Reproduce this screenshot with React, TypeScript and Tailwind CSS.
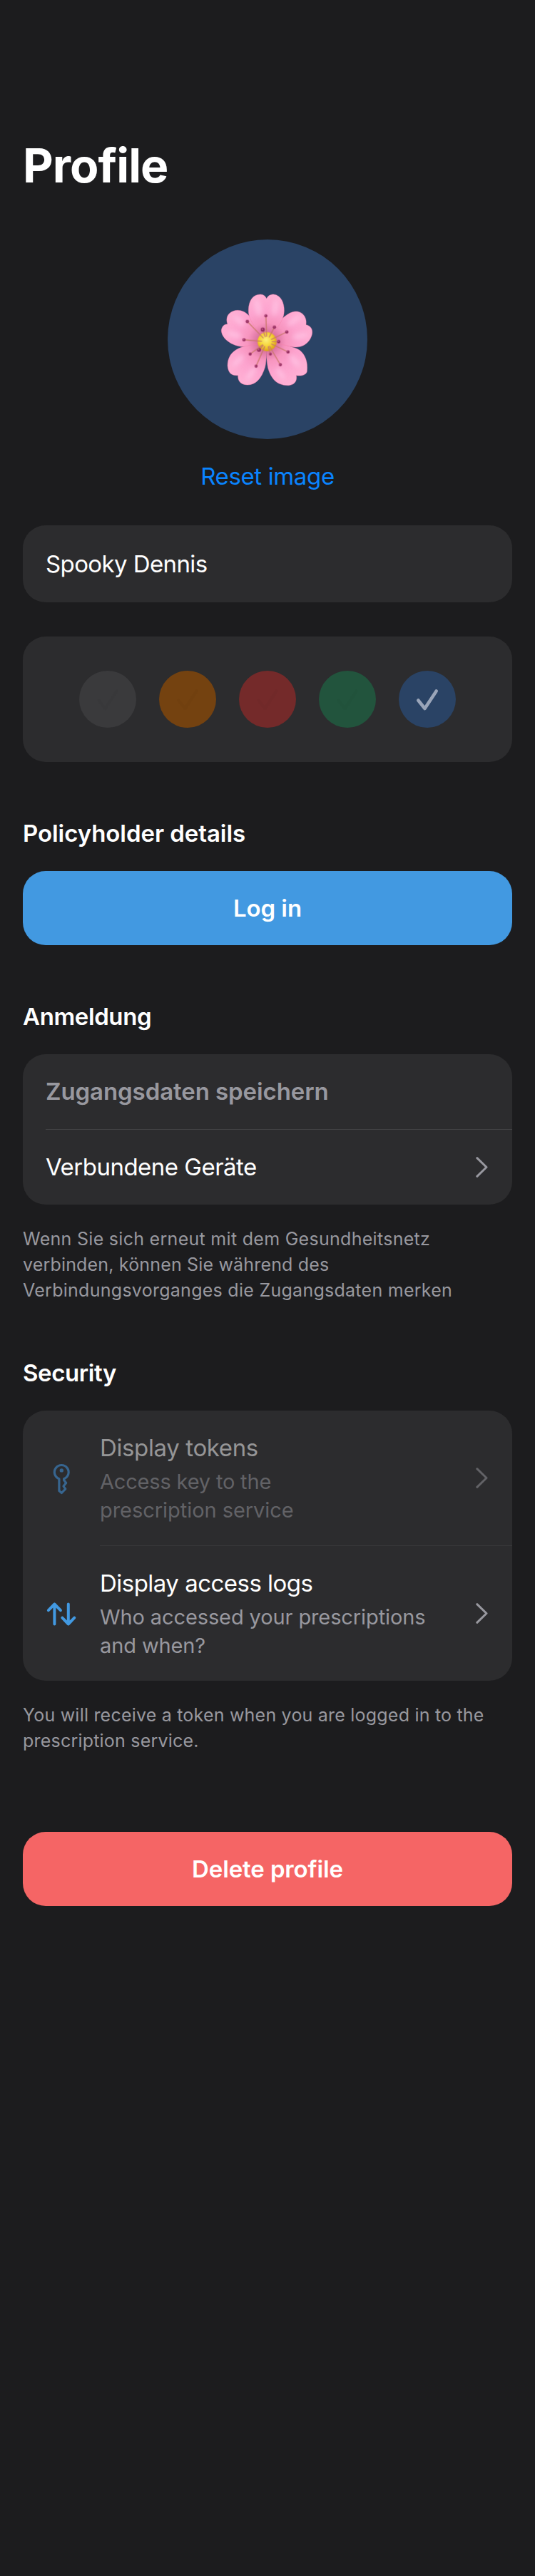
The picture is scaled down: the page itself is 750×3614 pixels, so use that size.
import type { ReactNode } from "react";
import clsx from "clsx";

const petals = [
  "M207 215 C170 225 130 237 100 235 C50 228 15 195 16 165 C18 150 28 140 42 140 C36 125 38 108 48 97 C65 80 90 78 110 88 C145 105 190 180 207 215Z",
  "M207 215 C220 180 270 95 325 87 C350 84 378 105 372 143 C390 146 400 160 398 178 C394 210 365 240 325 237 C290 232 240 225 207 215Z",
  "M206 215 C190 180 128 140 130 80 C131 40 150 15 180 15 C195 15 203 26 206 33 C211 22 220 15 236 15 C266 18 281 50 280 85 C279 140 225 180 206 215Z",
  "M207 215 C203 260 207 290 200 320 C185 370 160 396 125 396 C95 394 85 378 86 356 C60 358 45 348 42 315 C42 275 65 250 100 238 C130 228 170 225 207 215Z",
  "M207 215 C270 225 325 235 345 250 C370 270 380 300 376 340 C373 355 350 360 331 356 C335 375 328 395 300 398 C250 400 225 370 212 325 C205 290 203 250 207 215Z",
];

// x, y and radius of each anther
const stamens: [number, number, number][] = [
  [203, 105, 6.5], [239, 153, 7], [291, 173, 7], [257, 214, 7], [296, 257, 7],
  [264, 311, 6.5], [222, 266, 6], [162, 317, 6.5], [174, 248, 8.5], [137, 266, 6.5],
  [111, 206, 7], [190, 163, 8.5], [125, 129, 7],
];

function Flower() {
  return (
    <svg viewBox="0 0 420 420" className="mt-1 size-[140px]" role="img">
      <defs>
        <radialGradient id="petal" gradientUnits="userSpaceOnUse" cx="207" cy="214" r="200">
          <stop offset="0" stopColor="#c04a82" />
          <stop offset="0.22" stopColor="#dd76a3" />
          <stop offset="0.4" stopColor="#f795bf" />
          <stop offset="0.65" stopColor="#fda4cf" />
          <stop offset="1" stopColor="#ffb0d4" />
        </radialGradient>
        <radialGradient id="pollen" cx="0.45" cy="0.4" r="0.6">
          <stop offset="0" stopColor="#fdf07c" />
          <stop offset="0.6" stopColor="#f5d233" />
          <stop offset="1" stopColor="#d9a017" />
        </radialGradient>
        <filter id="soft" x="-50%" y="-50%" width="200%" height="200%">
          <feGaussianBlur stdDeviation="9" />
        </filter>
      </defs>
      {petals.map((d) => (
        <path key={d} d={d} fill="url(#petal)" stroke="#f77fa8" strokeOpacity="0.6" strokeWidth="2" />
      ))}
      <g filter="url(#soft)" fill="#ffc4e4" fillOpacity="0.75">
        <ellipse cx="170" cy="70" rx="14" ry="38" transform="rotate(-10 170 70)" />
        <ellipse cx="243" cy="70" rx="12" ry="36" transform="rotate(10 243 70)" />
        <ellipse cx="322" cy="125" rx="34" ry="12" transform="rotate(-35 322 125)" />
        <ellipse cx="348" cy="190" rx="34" ry="12" transform="rotate(-10 348 190)" />
        <ellipse cx="325" cy="295" rx="32" ry="13" transform="rotate(50 325 295)" />
        <ellipse cx="265" cy="350" rx="30" ry="11" transform="rotate(55 265 350)" />
        <ellipse cx="140" cy="350" rx="34" ry="12" transform="rotate(-55 140 350)" />
        <ellipse cx="85" cy="295" rx="34" ry="12" transform="rotate(-45 85 295)" />
        <ellipse cx="70" cy="185" rx="34" ry="12" transform="rotate(15 70 185)" />
        <ellipse cx="90" cy="125" rx="30" ry="12" transform="rotate(40 90 125)" />
      </g>
      <circle cx="208" cy="214" r="40" fill="url(#pollen)" />
      {stamens.map(([x, y, r]) => (
        <g key={`${x}-${y}`}>
          <line
            x1={207 + ((x - 207) * 22) / Math.hypot(x - 207, y - 214)}
            y1={214 + ((y - 214) * 22) / Math.hypot(x - 207, y - 214)}
            x2={x}
            y2={y}
            stroke="#c9796a"
            strokeWidth="4"
            strokeLinecap="round"
          />
          <circle cx={x} cy={y} r={r} fill="#922a5c" />
          <circle cx={x - 1.5} cy={y - 1.5} r={r * 0.4} fill="#c0608e" />
        </g>
      ))}
    </svg>
  );
}

function Check({ className }: { className: string }) {
  return (
    <svg viewBox="0 0 80 80" fill="none" stroke="currentColor" strokeWidth="4.6" strokeLinecap="round" strokeLinejoin="round" className={clsx("size-20", className)}>
      <path d="M27.3 41.5 36.5 53 52.7 28.5" />
    </svg>
  );
}

function Chevron({ className }: { className: string }) {
  return (
    <svg viewBox="0 0 17 29" fill="none" stroke="currentColor" strokeWidth="3" strokeLinecap="round" strokeLinejoin="round" className={clsx("h-[29px] w-[17px] shrink-0", className)}>
      <path d="M1.8 1.7 15 14.5 1.8 27.3" />
    </svg>
  );
}

function KeyIcon() {
  return (
    <svg viewBox="14 19.5 44 48" fill="none" stroke="currentColor" strokeWidth="3.2" strokeLinejoin="round" className="h-12 w-11 shrink-0 text-[#37658f]">
      <path d="M32.9 44.2A9.9 9.9 0 1 1 39.6 44.2V46L42.7 50 39 54.6 41.8 58.4 36.4 64 32.9 61Z" />
      <circle cx="36.3" cy="32.4" r="2.7" fill="currentColor" stroke="none" />
    </svg>
  );
}

function ArrowsIcon() {
  return (
    <svg viewBox="14 19.5 44 48" fill="none" stroke="currentColor" strokeWidth="4" strokeLinecap="round" strokeLinejoin="round" className="h-12 w-11 shrink-0 text-[#4299e1]">
      <path d="M26.4 30V58M17.9 38.7 26.4 30 34.9 38.7M45.8 29.9V58M37.3 49.2 45.8 58 54.3 49.2" />
    </svg>
  );
}

function Heading({ children, className }: { children: ReactNode; className: string }) {
  return <h2 className={clsx("mb-[31px] text-[33px] leading-[44px] font-semibold", className)}>{children}</h2>;
}

const swatches = ["bg-[#3a3a3c]", "bg-[#744210]", "bg-[#742a2a]", "bg-[#22543d]"];

export default function App() {
  return (
    <main className="flex min-h-[3614px] w-[750px] flex-col bg-[#1c1c1e] px-8 pt-48 font-['Inter',sans-serif] text-[33px] text-white">
      <h1 className="text-[66px] leading-[80px] font-bold tracking-[-1.01px]">Profile</h1>

      <div className="mt-16 flex size-[280px] items-center justify-center self-center rounded-full bg-[#2a4365]">
        <Flower />
      </div>
      <button className="mt-[30px] self-center leading-[44px] tracking-[-0.37px] text-[#0a84ff]">Reset image</button>

      <div className="mt-[47px] flex h-[108px] items-center rounded-[32px] bg-[#2c2c2e] px-8 leading-[44px] tracking-[-0.6px]">Spooky Dennis</div>

      <div className="mt-12 flex h-44 items-center justify-center gap-8 rounded-[32px] bg-[#2c2c2e]">
        {swatches.map((color) => (
          <div key={color} className={clsx("size-20 rounded-full", color)}>
            <Check className="text-black/2" />
          </div>
        ))}
        <div className="size-20 rounded-full bg-[#2a4365]">
          <Check className="text-[#9aa5b9]" />
        </div>
      </div>

      <Heading className="mt-[78px] tracking-[-0.06px]">Policyholder details</Heading>
      <button className="h-[104px] rounded-[32px] bg-[#4299e1] leading-[44px] font-semibold tracking-[-0.07px]">Log in</button>

      <Heading className="mt-[78px] tracking-[-0.38px]">Anmeldung</Heading>
      <section className="rounded-[32px] bg-[#2c2c2e] pl-8">
        <div className="flex h-[106px] items-center border-b border-[#434345] font-semibold tracking-[-0.09px] text-[#98989f]">Zugangsdaten speichern</div>
        <div className="flex h-[105px] items-center justify-between pr-[34px] tracking-[-0.51px]">
          Verbundene Geräte
          <Chevron className="text-[#98989f]" />
        </div>
      </section>
      <p className="mt-[30px] text-[25px] leading-9 tracking-[0.29px] text-[#98989f]">
        Wenn Sie sich erneut mit dem Gesundheitsnetz
        <br />
        <span className="tracking-[0.17px]">verbinden, können Sie während des</span>
        <br />
        <span className="tracking-[0.27px]">Verbindungsvorganges die Zugangsdaten merken</span>
      </p>

      <Heading className="mt-[76px] tracking-[-0.4px]">Security</Heading>
      <section className="rounded-[32px] bg-[#2c2c2e] pl-8">
        <div className="flex gap-8">
          <div className="flex h-[189px] items-center">
            <KeyIcon />
          </div>
          <div className="flex h-[190px] grow items-center justify-between border-b border-[#38383a] pr-[34px]">
            <div className="flex h-full flex-col pt-8">
              <div className="leading-10 tracking-[-0.37px] text-[#959596]">Display tokens</div>
              <div className="mt-2 text-[29px] leading-10 tracking-[-0.18px] text-[#626266]">
                Access key to the
                <br />
                <span className="tracking-[-0.05px]">prescription service</span>
              </div>
            </div>
            <Chevron className="text-[#626266]" />
          </div>
        </div>
        <div className="flex gap-8">
          <div className="flex h-[189px] items-center">
            <ArrowsIcon />
          </div>
          <div className="flex h-[189px] grow items-center justify-between pr-[34px]">
            <div className="flex h-full flex-col pt-8">
              <div className="leading-10 tracking-[-0.52px]">Display access logs</div>
              <div className="mt-2 text-[29px] leading-10 tracking-[-0.11px] text-[#98989f]">
                Who accessed your prescriptions
                <br />
                and when?
              </div>
            </div>
            <Chevron className="text-[#98989f]" />
          </div>
        </div>
      </section>
      <p className="mt-[30px] text-[25px] leading-9 tracking-[0.21px] text-[#98989f]">
        You will receive a token when you are logged in to the
        <br />
        prescription service.
      </p>

      <button className="mt-[110px] h-[104px] rounded-[32px] bg-[#f56565] leading-[44px] font-semibold tracking-[-0.12px]">Delete profile</button>
    </main>
  );
}
